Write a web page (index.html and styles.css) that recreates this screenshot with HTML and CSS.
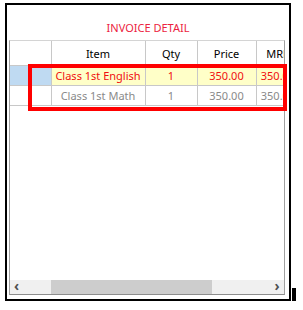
FILE: index.html
```html
<!DOCTYPE html>
<html lang="en">

<head>
    <meta charset="UTF-8">
    <meta name="viewport" content="width=device-width, initial-scale=1.0">
    <title>Invoice Detail</title>
    <link rel="stylesheet" href="styles.css">
</head>

<body>
    <div class="frame">
        <div class="title">INVOICE DETAIL</div>
        <div class="grid">
            <div class="grid-body">
                <table class="rows">
                    <colgroup>
                        <col class="c-head">
                        <col class="c-item">
                        <col class="c-qty">
                        <col class="c-price">
                        <col class="c-mrp">
                    </colgroup>
                    <thead>
                        <tr>
                            <th></th>
                            <th>Item</th>
                            <th>Qty</th>
                            <th>Price</th>
                            <th>MRP</th>
                        </tr>
                    </thead>
                    <tbody>
                        <tr class="current">
                            <td class="row-head"></td>
                            <td>Class 1st English</td>
                            <td>1</td>
                            <td>350.00</td>
                            <td>350.00</td>
                        </tr>
                        <tr class="other">
                            <td class="row-head"></td>
                            <td>Class 1st Math</td>
                            <td>1</td>
                            <td>350.00</td>
                            <td>350.00</td>
                        </tr>
                    </tbody>
                </table>
            </div>
            <div class="hscroll">
                <div class="arrow">&#8249;</div>
                <div class="thumb"></div>
                <div class="track"></div>
                <div class="arrow">&#8250;</div>
            </div>
        </div>
        <div class="mark"></div>
    </div>
</body>

</html>
```

FILE: styles.css
```css
body {
    margin: 0;
    background-color: white;
    font-family: "Noto Sans", "Open Sans", sans-serif;
}

.frame {
    position: relative;
    box-sizing: border-box;
    width: 286px;
    height: 298px;
    margin: 3px 0 0 5px;
    border: 2px solid black;
    display: flex;
    flex-direction: column;
}

.frame::after {
    content: "";
    position: absolute;
    right: -7px;
    bottom: -2px;
    width: 4px;
    height: 13px;
    background-color: black;
}

.title {
    height: 35px;
    line-height: 14px;
    padding-top: 16px;
    box-sizing: border-box;
    text-align: center;
    color: #ec2340;
    font-size: 11px;
}

.grid {
    box-sizing: border-box;
    width: 276px;
    height: 255px;
    margin-left: 2px;
    border-left: 1px solid #a0a0a0;
    border-right: 1px solid #a0a0a0;
    border-top: 1px solid #d4d4d4;
    border-bottom: 1px solid #8c8c8c;
    display: flex;
    flex-direction: column;
}

.grid-body {
    flex: 1;
    overflow: hidden;
}

.rows {
    table-layout: fixed;
    border-collapse: collapse;
    width: 290px;
    font-size: 11px;
}

.c-head { width: 41px; }
.c-item { width: 94px; }
.c-qty { width: 52px; }
.c-price { width: 59px; }
.c-mrp { width: 44px; }

.rows th {
    height: 24px;
    padding: 0;
    font-weight: normal;
    color: black;
    white-space: nowrap;
    overflow: hidden;
    border-right: 1px solid #c8c8c8;
    border-bottom: 1px solid #c8c8c8;
}

.rows td {
    height: 19px;
    padding: 0;
    text-align: center;
    white-space: nowrap;
    overflow: hidden;
    border-right: 1px solid #c8c8c8;
    border-bottom: 1px solid #c8c8c8;
}

.current td {
    background-color: #ffffc8;
    color: #f01010;
}

.current .row-head {
    background-color: #bfdaf2;
}

.other td {
    color: #8a8a8a;
}

.hscroll {
    height: 14px;
    display: flex;
    background-color: #f0f0f0;
}

.arrow {
    width: 14px;
    font-size: 14px;
    line-height: 12px;
    font-weight: bold;
    text-align: center;
    color: #505050;
}

.hscroll .arrow:first-child {
    width: 41px;
    text-align: left;
    padding-left: 4px;
    box-sizing: border-box;
}

.thumb {
    width: 161px;
    background-color: #cdcdcd;
}

.track {
    flex: 1;
}

.mark {
    position: absolute;
    left: 21px;
    top: 59px;
    width: 251px;
    height: 39px;
    border: 4px solid #ff0000;
}
```
